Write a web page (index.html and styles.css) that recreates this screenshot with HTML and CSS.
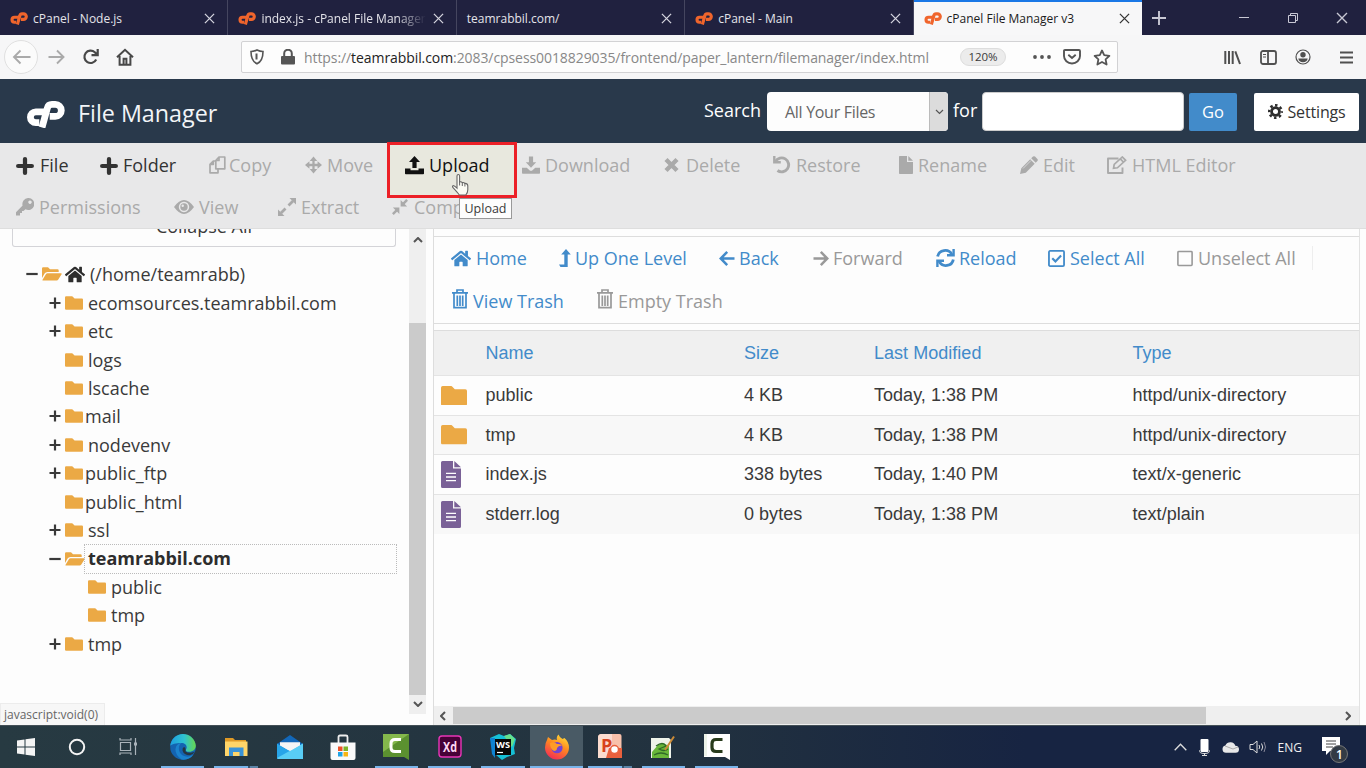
FILE: index.html
```html
<!DOCTYPE html>
<html lang="en">
<head>
<meta charset="utf-8">
<title>cPanel File Manager v3</title>
<link rel="stylesheet" href="styles.css">
</head>
<body>
<svg class="defs" aria-hidden="true">
  <symbol id="cp" viewBox="0 0 39 27"><g fill="none" stroke="currentColor" stroke-width="6.800"><path d="M18 10.800h-8.200a5.400 5.400 0 0 0 0 10.800h3.500" /><path d="M16 26.500l5.400-19.500q.8-3.600 4.600-3.600h3.300a6 6 0 0 1 0 12h-5.600"/></g></symbol>
  <symbol id="x" viewBox="0 0 12 12"><path d="M1 1l10 10M11 1L1 11" fill="none" stroke="currentColor" stroke-width="1.400"/></symbol>
  <symbol id="plus" viewBox="0 0 17 17"><path d="M8.500 2v13M2 8.500h13" stroke="currentColor" stroke-width="4" stroke-linecap="round" stroke-linejoin="round"/></symbol>
  <symbol id="tplus" viewBox="0 0 12 12"><path d="M6 .5v11M.5 6h11" stroke="currentColor" stroke-width="2.200"/></symbol>
  <symbol id="tminus" viewBox="0 0 12 12"><path d="M.3 6h11.400" stroke="currentColor" stroke-width="2.200"/></symbol>
  <symbol id="folder" viewBox="0 64 512 384"><path fill="currentColor" d="M480 128H272l-58-58q-6-6-14-6H32Q0 64 0 96v320q0 32 32 32h448q32 0 32-32V160q0-32-32-32z"/></symbol>
  <symbol id="open" viewBox="0 0 20 14"><path fill="currentColor" d="M0 11V1.500Q0 .3 1.200.3H6l2 2h7.500q1.200 0 1.200 1.200V5H5.500Q3.500 5 2.600 6.600z"/><path fill="currentColor" d="M5.500 6.200H19q1.200 0 .6 1l-3.300 5.400q-.6 1-1.600 1H1.300q-1.300 0-.6-1L3.900 7.200q.6-1 1.600-1z"/></symbol>
  <symbol id="home" viewBox="0 32 576 448"><path fill="currentColor" d="M280.370 148.260L96 300.110V464a16 16 0 0 0 16 16l112.060-.29a16 16 0 0 0 15.920-16V368a16 16 0 0 1 16-16h64a16 16 0 0 1 16 16v95.640a16 16 0 0 0 16 16.050L464 480a16 16 0 0 0 16-16V300L295.670 148.260a12.190 12.190 0 0 0-15.300 0zM571.600 251.470L488 182.560V44.050a12 12 0 0 0-12-12h-56a12 12 0 0 0-12 12v72.610L318.470 43a48 48 0 0 0-61 0L4.340 251.470a12 12 0 0 0-1.600 16.900l25.500 31A12 12 0 0 0 45.150 301l235.220-193.740a12.190 12.190 0 0 1 15.300 0L530.900 301a12 12 0 0 0 16.900-1.600l25.500-31a12 12 0 0 0-1.700-16.930z"/></symbol>
  <symbol id="copy" viewBox="0 0 17 18"><g fill="none" stroke="currentColor" stroke-width="1.700" stroke-linejoin="round"><path d="M10 1h5.800v11.800H6.800V4.500zM10 1v3.500H6.800"/><path d="M6.800 5H4.300L1 8.300v8.500h8v-4M4.300 5v3.300H1"/></g></symbol>
  <symbol id="move" viewBox="0 0 18 18"><path d="M9 3v12M3 9h12" stroke="currentColor" stroke-width="2.400"/><path fill="currentColor" d="M9 0l4 4.700H5zM9 18l4-4.700H5zM0 9l4.700-4v8zM18 9l-4.700-4v8z"/></symbol>
  <symbol id="upload" viewBox="0 0 19 19"><path fill="currentColor" d="M9.500 0L15 6h-3.400v6H7.400V6H4zM0 12.500h5.500v1.800h8v-1.800H19v5q0 .8-.8.8H.8q-.8 0-.8-.8z"/></symbol>
  <symbol id="download" viewBox="0 0 19 19"><path fill="currentColor" d="M7.300 0h4.400v6H15l-5.500 6L4 6h3.300zM0 12h5l3.500 3h2L14 12h5v5.500q0 .8-.8.8H.8q-.8 0-.8-.8z"/></symbol>
  <symbol id="times" viewBox="0 0 15 15"><path d="M2 2l11 11M13 2L2 13" stroke="currentColor" stroke-width="4.400"/></symbol>
  <symbol id="undo" viewBox="0 0 18 18"><path d="M2.500 5.500a7 7 0 1 1 2 9" fill="none" stroke="currentColor" stroke-width="2.900"/><path d="M1.300 0v6.200h6.500" fill="none" stroke="currentColor" stroke-width="2.400"/></symbol>
  <symbol id="file" viewBox="0 0 14 18"><path fill="currentColor" d="M0 .8Q0 0 .8 0H8v6h6v11.200q0 .8-.8.8H.8q-.8 0-.8-.8zM9.300 0L14 4.800H9.300z"/></symbol>
  <symbol id="pencil" viewBox="0 0 18 18"><path fill="currentColor" d="M0 18l1.300-5.800 8.900-8.900 4.500 4.500-8.900 8.900zM11.200 2.300L13 .6q1-.9 2 0l2.400 2.400q.9 1 0 2l-1.700 1.800z"/><path d="M3 12.500l8-8" stroke="#e8e8e9" stroke-width=".7"/></symbol>
  <symbol id="edit" viewBox="0 0 20 18"><path d="M11.500 2.500H1v14.500h14.500V11.500" fill="none" stroke="currentColor" stroke-width="1.900" stroke-linejoin="round"/><path d="M6.500 12.300l.7-3.800L15.300 1l3.300 3.300-8.200 7.500zM13.300 2.900l3.200 3.200" fill="none" stroke="currentColor" stroke-width="1.700"/></symbol>
  <symbol id="key" viewBox="0 0 18 18"><path fill="currentColor" fill-rule="evenodd" d="M12 0a6 6 0 1 1-2.500 11.300L7.500 13H6v2H4v2.500H0v-3.300l6.600-6.600A6 6 0 0 1 12 0zm2 2.500a1.700 1.700 0 1 0 .01 0z"/></symbol>
  <symbol id="eye" viewBox="0 0 20 14"><path fill="currentColor" fill-rule="evenodd" d="M0 7q10-14 20 0-10 14-20 0zm10-5.200a5.200 5.200 0 1 0 .01 0z"/><circle cx="10" cy="7" r="3.700" fill="currentColor"/><circle cx="8.700" cy="5.700" r="1.200" fill="#e8e8e9"/></symbol>
  <symbol id="extract" viewBox="0 0 18 18"><path d="M10.500 7.500L15 3M7.500 10.500L3 15" stroke="currentColor" stroke-width="2.800"/><path fill="currentColor" d="M11.500 0H18v6.500zM0 11.500V18h6.500z"/></symbol>
  <symbol id="compress" viewBox="0 0 18 18"><path d="M12 6l5-5M6 12l-5 5" stroke="currentColor" stroke-width="2.800"/><path fill="currentColor" d="M9.700 1v7.300H17zM1 9.700h7.300V17z"/></symbol>
  <symbol id="level" viewBox="0 0 12 18"><path fill="currentColor" d="M7 0l4.800 5.500H8.700V18H1.500L0 15.600h5.300V5.500H2.200z"/></symbol>
  <symbol id="left" viewBox="0 0 16 16"><path d="M8.200 1.400L1.700 8l6.500 6.600M2 8h13.500" fill="none" stroke="currentColor" stroke-width="2.500"/></symbol>
  <symbol id="right" viewBox="0 0 16 16"><path d="M7.800 1.400L14.300 8l-6.500 6.600M14 8H.5" fill="none" stroke="currentColor" stroke-width="2.500"/></symbol>
  <symbol id="reload" viewBox="0 0 19 18"><g fill="none" stroke="currentColor" stroke-width="2.800"><path d="M1.700 7.500A7.500 7 0 0 1 15.800 5.300M17.300 10.500A7.500 7 0 0 1 3.200 12.700"/><path d="M17.600 0v6.200H11M1.400 18v-6.200H8" stroke-width="2.400"/></g></symbol>
  <symbol id="check" viewBox="0 0 16 16"><rect x=".9" y=".9" width="14.200" height="14.200" rx="1" fill="none" stroke="currentColor" stroke-width="1.700"/><path d="M4 7.700l3 3 5.300-5.600" fill="none" stroke="currentColor" stroke-width="2"/></symbol>
  <symbol id="box" viewBox="0 0 16 16"><rect x=".9" y=".9" width="14.200" height="14.200" rx="1" fill="none" stroke="currentColor" stroke-width="1.600"/></symbol>
  <symbol id="trash" viewBox="0 0 16 20"><path d="M0 3.800h16M5 3.500V1h6v2.500M2 4v14.700h12V4M5.300 6.500V17M8 6.500V17M10.700 6.500V17" fill="none" stroke="currentColor" stroke-width="1.700"/></symbol>
  <symbol id="doc" viewBox="0 0 20 27"><path fill="#7a6197" d="M0 1.500Q0 0 1.500 0H12v7.500h8v18q0 1.500-1.500 1.500h-17Q0 27 0 25.500zM13.300 0L20 6.300h-6.700z"/><path d="M5 12.300h10M5 16h10M5 19.600h10" stroke="#fff" stroke-width="1.300"/></symbol>
  <symbol id="chev" viewBox="0 0 10 6"><path d="M1 5l4-4 4 4" fill="none" stroke="currentColor" stroke-width="2"/></symbol>
</svg>

<div class="tabs">
  <div class="tab"><svg class="fav"><use href="#cp"/></svg><span>cPanel - Node.js</span><svg class="close"><use href="#x"/></svg></div>
  <div class="tab"><svg class="fav"><use href="#cp"/></svg><span class="fade">index.js - cPanel File Manager</span><svg class="close"><use href="#x"/></svg></div>
  <div class="tab"><span>teamrabbil.com/</span><svg class="close"><use href="#x"/></svg></div>
  <div class="tab"><svg class="fav"><use href="#cp"/></svg><span>cPanel - Main</span><svg class="close"><use href="#x"/></svg></div>
  <div class="tab active"><svg class="fav"><use href="#cp"/></svg><span class="wide">cPanel File Manager v3</span><svg class="close"><use href="#x"/></svg></div>
  <svg class="newtab" viewBox="0 0 16 16"><path d="M8 1v14M1 8h14" stroke="#c8c8d4" stroke-width="1.900"/></svg>
  <div class="winbtns">
    <svg width="12" height="12"><path d="M1 5.500h10" stroke="#c8c8d4"/></svg>
    <svg width="12" height="12" fill="none" stroke="#c8c8d4"><path d="M1.500 3.500h7v7h-7zM3.500 3.500v-2h7v7h-2"/></svg>
    <svg width="12" height="12" color="#c8c8d4"><use href="#x"/></svg>
  </div>
</div>

<div class="nav">
  <span class="backbtn"><svg width="19" height="16" fill="none" stroke="#aaa" stroke-width="1.900"><path d="M8.500 1.500L2 8l6.500 6.500M2 8h16.500"/></svg></span>
  <svg class="fwd" width="18" height="16" fill="none" stroke="#aaa" stroke-width="1.900"><path d="M9 1.500L15.500 8 9 14.500M15 8H.5"/></svg>
  <svg class="rel" width="18" height="18" fill="none" stroke="#484848" stroke-width="2.200"><path d="M14.200 11.500A6.200 6.200 0 1 1 12.800 4.200L15 6.400M15.700 1v6.200H9.500"/></svg>
  <svg class="hm" width="18" height="18" fill="none" stroke="#484848" stroke-width="2"><path d="M1 9.300L9 1.800l8 7.500M3.600 8v8.700h10.800V8M7.600 16.500v-5.800h2.800v5.800"/></svg>
  <div class="url">
    <svg width="14" height="16" fill="none" stroke="#555" stroke-width="1.600"><path d="M1 2.500Q4 2.500 7 1q3 1.500 6 1.500 0 9.500-6 12.300Q1 12 1 2.500z"/><path d="M6.500 4.500v6" stroke-width="2"/></svg>
    <svg class="lock" width="14" height="16"><rect x="0" y="7" width="14" height="8.500" rx="1" fill="#555"/><path d="M3.200 7V4.500a3.800 3.800 0 0 1 7.600 0V7" fill="none" stroke="#555" stroke-width="2"/></svg>
    <span class="addr">https://<b>teamrabbil.com</b>:2083/cpsess0018829035/frontend/paper_lantern/filemanager/index.html</span>
    <span class="zoom">120%</span>
    <svg class="dots" width="18" height="4" fill="#555"><circle cx="2" cy="2" r="1.900"/><circle cx="9" cy="2" r="1.900"/><circle cx="16" cy="2" r="1.900"/></svg>
    <svg class="pocket" width="18" height="16" fill="none" stroke="#555" stroke-width="1.900"><path d="M1 2q0-1 1-1h14q1 0 1 1v5a8 7.500 0 0 1-16 0zM5.300 5.700L9 9l3.700-3.300"/></svg>
    <svg class="star" width="18" height="17" fill="none" stroke="#555" stroke-width="1.800"><path d="M9 1.500l2.200 4.700 5.200.6-3.800 3.500 1 5.200L9 13l-4.600 2.500 1-5.200L1.600 6.800l5.200-.6z" stroke-linejoin="round"/></svg>
  </div>
  <div class="tools">
    <svg width="17" height="15" stroke="#505050" stroke-width="2"><path d="M1.300 1v13M5 1v13M8.700 1v13M11.300 1.300L16 14" /></svg>
    <svg width="17" height="15" fill="none" stroke="#505050" stroke-width="1.800"><rect x="1" y="1" width="15" height="13" rx="2"/><path d="M8 1v13"/><path d="M3 4.500h3M3 7h3" stroke-width="1.200"/></svg>
    <svg width="16" height="16"><circle cx="8" cy="8" r="7" fill="none" stroke="#505050" stroke-width="1.200"/><circle cx="8" cy="5.700" r="2.700" fill="#505050"/><path d="M3.300 9.500h9.400q-.7 3.800-4.700 3.800t-4.700-3.800z" fill="#505050"/></svg>
    <svg width="13" height="13" stroke="#505050" stroke-width="1.900"><path d="M0 1.500h13M0 6.500h13M0 11.500h13"/></svg>
  </div>
</div>

<header class="header">
  <svg class="logo"><use href="#cp"/></svg>
  <h1>File Manager</h1>
  <label>Search</label>
  <div class="select"><span>All Your Files</span><i><svg width="9" height="6" fill="none" stroke="#555" stroke-width="1.200"><path d="M1 1l3.500 3.500L8 1"/></svg></i></div>
  <label class="for">for</label>
  <div class="input"></div>
  <div class="go">Go</div>
  <div class="settings"><svg width="15" height="15" viewBox="0 0 16 16" fill="none" stroke="#2d2d2d"><circle cx="8" cy="8" r="4.200" stroke-width="3"/><circle cx="8" cy="8" r="6.700" stroke-width="2.600" stroke-dasharray="2.630 2.632" stroke-dashoffset="1.300"/></svg><span>Settings</span></div>
</header>

<div class="bar">
  <div class="row r1">
    <div class="it on"><svg class="g24" viewBox="0 0 24 19"><use href="#plus" width="18" height="18" y="1"/></svg><span>File</span></div>
    <div class="it on"><svg class="g23" viewBox="0 0 23 19"><use href="#plus" width="18" height="18" y="1"/></svg><span>Folder</span></div>
    <div class="it"><svg class="g20" viewBox="0 0 20 19"><use href="#copy" width="17" height="18"/></svg><span>Copy</span></div>
    <div class="it"><svg class="g22" viewBox="0 0 22 19"><use href="#move" width="17" height="18"/></svg><span>Move</span></div>
    <div class="it up"><svg class="g24" viewBox="0 0 24 19"><use href="#upload" width="19" height="19"/></svg><span>Upload</span></div>
    <div class="it"><svg class="g23" viewBox="0 0 23 19"><use href="#download" width="18" height="19"/></svg><span>Download</span></div>
    <div class="it"><svg class="g22" viewBox="0 0 22 19"><use href="#times" width="15" height="15" y="1.500"/></svg><span>Delete</span></div>
    <div class="it"><svg class="g23" viewBox="0 0 23 19"><use href="#undo" width="18" height="18"/></svg><span>Restore</span></div>
    <div class="it"><svg class="g19" viewBox="0 0 19 19"><use href="#file" width="14" height="18"/></svg><span>Rename</span></div>
    <div class="it"><svg class="g23" viewBox="0 0 23 19"><use href="#pencil" width="18" height="18"/></svg><span>Edit</span></div>
    <div class="it"><svg class="g25" viewBox="0 0 25 19"><use href="#edit" width="20" height="18"/></svg><span>HTML Editor</span></div>
  </div>
  <div class="row r2">
    <div class="it"><svg class="g23" viewBox="0 0 23 19"><use href="#key" width="18" height="18"/></svg><span>Permissions</span></div>
    <div class="it"><svg class="g25" viewBox="0 0 25 19"><use href="#eye" width="20" height="14" y="2"/></svg><span>View</span></div>
    <div class="it"><svg class="g23" viewBox="0 0 23 19"><use href="#extract" width="18" height="18"/></svg><span>Extract</span></div>
    <div class="it"><svg class="g22" viewBox="0 0 22 19"><use href="#compress" width="16" height="18"/></svg><span>Compress</span></div>
  </div>
</div>
<div class="mark"></div>
<div class="tip">Upload</div>
<svg class="cursor" viewBox="0 0 19 22"><path d="M6 13V2.500q0-1.500 1.300-1.500t1.300 1.500V8.500q1.500-.8 2.700.6 1.500-.5 2.500.8 2.700-.2 3 2.300v4q0 3-2 5.300H8.300Q6.500 19 2 14.200q-1-1.500 0-2t4 2.500z" fill="#fbfbf4" stroke="#666" stroke-width="1.100"/><path d="M8.600 8v4M11.300 9v3.500M13.900 10v3" stroke="#666" stroke-width="1"/></svg>

<main class="main">
  <aside class="side">
    <div class="collapse"><span>Collapse All</span></div>
    <div class="tree">
      <div class="n l0"><svg class="tg"><use href="#tminus"/></svg><svg class="fo"><use href="#open"/></svg><svg class="ho"><use href="#home"/></svg><span>(/home/teamrabb)</span></div>
      <div class="n"><svg class="tg"><use href="#tplus"/></svg><svg class="fd"><use href="#folder"/></svg><span>ecomsources.teamrabbil.com</span></div>
      <div class="n"><svg class="tg"><use href="#tplus"/></svg><svg class="fd"><use href="#folder"/></svg><span>etc</span></div>
      <div class="n"><i class="tg"></i><svg class="fd"><use href="#folder"/></svg><span>logs</span></div>
      <div class="n"><i class="tg"></i><svg class="fd"><use href="#folder"/></svg><span>lscache</span></div>
      <div class="n near"><svg class="tg"><use href="#tplus"/></svg><svg class="fd"><use href="#folder"/></svg><span>mail</span></div>
      <div class="n"><svg class="tg"><use href="#tplus"/></svg><svg class="fd"><use href="#folder"/></svg><span>nodevenv</span></div>
      <div class="n near"><svg class="tg"><use href="#tplus"/></svg><svg class="fd"><use href="#folder"/></svg><span>public_ftp</span></div>
      <div class="n near"><i class="tg"></i><svg class="fd"><use href="#folder"/></svg><span>public_html</span></div>
      <div class="n"><svg class="tg"><use href="#tplus"/></svg><svg class="fd"><use href="#folder"/></svg><span>ssl</span></div>
      <div class="n sel"><svg class="tg"><use href="#tminus"/></svg><svg class="fo"><use href="#open"/></svg><b>teamrabbil.com</b></div>
      <div class="n l2"><svg class="fd"><use href="#folder"/></svg><span>public</span></div>
      <div class="n l2"><svg class="fd"><use href="#folder"/></svg><span>tmp</span></div>
      <div class="n"><svg class="tg"><use href="#tplus"/></svg><svg class="fd"><use href="#folder"/></svg><span>tmp</span></div>
    </div>
    <div class="status">javascript:void(0)</div>
  </aside>
  <div class="vscroll"><svg class="ar"><use href="#chev"/></svg><div class="thumb"></div><svg class="ar down"><use href="#chev"/></svg></div>
  <section class="files">
    <div class="actions">
      <div class="row a1">
        <div class="it"><svg class="g25" viewBox="0 0 25 19"><use href="#home" width="20" height="17" y="1"/></svg><span>Home</span></div>
        <div class="it"><svg class="g16" viewBox="0 0 16 19"><use href="#level" width="12" height="18"/></svg><span>Up One Level</span></div>
        <div class="it"><svg class="g20" viewBox="0 0 20 19"><use href="#left" width="16" height="16" y="1.500"/></svg><span>Back</span></div>
        <div class="it off"><svg class="g20" viewBox="0 0 20 19"><use href="#right" width="16" height="16" y="1.500"/></svg><span>Forward</span></div>
        <div class="it"><svg class="g23" viewBox="0 0 23 19"><use href="#reload" width="19" height="18"/></svg><span>Reload</span></div>
        <div class="it"><svg class="g22" viewBox="0 0 22 19"><use href="#check" width="17" height="17" y="1"/></svg><span>Select All</span></div>
        <div class="it off"><svg class="g21" viewBox="0 0 21 19"><use href="#box" width="16" height="16" y="1.500"/></svg><span>Unselect All</span></div>
      </div>
      <div class="row a2">
        <div class="it"><svg class="g22" viewBox="0 0 22 21"><use href="#trash" x="1" width="16" height="20"/></svg><span>View Trash</span></div>
        <div class="it off"><svg class="g22" viewBox="0 0 22 21"><use href="#trash" x="1" width="16" height="20"/></svg><span>Empty Trash</span></div>
      </div>
    </div>
    <div class="table">
      <div class="tr th"><span></span><span>Name</span><span>Size</span><span>Last Modified</span><span>Type</span></div>
      <div class="tr"><svg class="bigf"><use href="#folder"/></svg><span>public</span><span>4 KB</span><span>Today, 1:38 PM</span><span>httpd/unix-directory</span></div>
      <div class="tr alt"><svg class="bigf"><use href="#folder"/></svg><span>tmp</span><span>4 KB</span><span>Today, 1:38 PM</span><span>httpd/unix-directory</span></div>
      <div class="tr"><svg class="doc"><use href="#doc"/></svg><span>index.js</span><span>338 bytes</span><span>Today, 1:40 PM</span><span>text/x-generic</span></div>
      <div class="tr alt"><svg class="doc"><use href="#doc"/></svg><span>stderr.log</span><span>0 bytes</span><span>Today, 1:38 PM</span><span>text/plain</span></div>
    </div>
    <div class="hscroll"><svg class="ar l"><use href="#chev"/></svg><div class="hthumb"></div><svg class="ar r"><use href="#chev"/></svg></div>
  </section>
</main>

<footer class="task">
  <div class="c s"><svg viewBox="0 0 18 18" width="18" height="18" fill="#f4f4f4"><path d="M0 2.600L7.500 1.500v7H0zM8.500 1.300L18 0v8.500H8.500zM0 9.500h7.500v7L0 15.400zM8.500 9.500H18V18l-9.500-1.300z"/></svg></div>
  <div class="c s"><svg width="18" height="18"><circle cx="9" cy="9" r="7.200" fill="none" stroke="#f4f4f4" stroke-width="2"/></svg></div>
  <div class="c s"><svg width="19" height="17" fill="none" stroke="#aab3ba" stroke-width="1.200"><path d="M1.500 4.500h10v8h-10zM1 0v2h11V0M1 17v-2h11v2M16.500 0v17"/><path d="M15 6h3" stroke-width="3"/></svg></div>
  <div class="c run"><svg viewBox="0 0 26 26" width="26" height="26"><defs><linearGradient id="eg" x1="0" x2="1"><stop offset="0" stop-color="#1d9ee0"/><stop offset=".55" stop-color="#2fc3d0"/><stop offset="1" stop-color="#67d84d"/></linearGradient></defs><circle cx="13" cy="13" r="12.800" fill="#1463b0"/><path d="M.3 12A12.800 12.800 0 0 1 25.800 11.500c0 4.500-3.500 6.500-7 6.200-3 0-3.600-1.200-2.600-2.700 1.500-3-.8-6-4.700-6C6 9 1.500 10 .3 12z" fill="url(#eg)"/><path d="M11.500 9C7 12 8 21 16 22.500q4 .7 7.500-2-4 6-12 5Q5 21 5.500 15 6.200 9.500 11.500 9z" fill="#1b82cd"/><path d="M15.500 17.400q3.500 2.300 9 .4-1.500 3-4.500 3.500-6 .2-7.500-4.800-.3-2.700 1.500-3.600 2 .6 1.500 4.500z" fill="#263640"/></svg></div>
  <div class="c run multi"><svg viewBox="0 0 24 20" width="24" height="20"><path d="M1 1h8l2 2h11v4H1z" fill="#df9a26"/><path d="M1 4.500h22.500V19H1z" fill="#ffd569"/><path d="M5 19v-8.500h14.500V19h-4v-4h-6.500v4z" fill="#3a93d7"/></svg></div>
  <div class="c"><svg viewBox="0 0 26 24" width="26" height="24"><path d="M0 9L13 0l13 9v14H0z" fill="#1267b8"/><path d="M3 7.500h20v8H3z" fill="#f5f5f5"/><path d="M0 8.500l13 7.500 13-7.500v14.500q0 1-1 1H1q-1 0-1-1z" fill="#27a4e8"/><path d="M0 23L26 8.500V24H1z" fill="#59cdf5"/><path d="M3 7.500h20v2.700L13 16 3 10.200z" fill="#f5f5f5"/></svg></div>
  <div class="c"><svg viewBox="0 0 26 26" width="26" height="26"><path d="M8.500 9V3q0-1.500 1.500-1.500h6q1.500 0 1.500 1.500v6" fill="none" stroke="#eee" stroke-width="1.800"/><path d="M.5 8.500h25V24q0 2-2 2h-21q-2 0-2-2z" fill="#fafafa"/><path d="M8 12.500h4.500V17H8z" fill="#ef5128"/><path d="M13.500 12.500H18V17h-4.500z" fill="#7eb52a"/><path d="M8 18h4.500v4.500H8z" fill="#20a3e6"/><path d="M13.500 18H18v4.500h-4.500z" fill="#f9b613"/></svg></div>
  <div class="c run"><svg viewBox="0 0 26 26" width="26" height="26"><path d="M0 0h26v26l-5-3H0z" fill="#5b9130"/><path d="M0 0h26L0 18z" fill="#84b84c"/><path d="M18 5.500h-6q-4 0-4 4v4q0 4 4 4h6" fill="none" stroke="#fff" stroke-width="3"/></svg></div>
  <div class="c run"><svg viewBox="0 0 24 23" width="24" height="23"><rect x="1" y="1" width="22" height="21" rx="3" fill="#470137" stroke="#e935b7" stroke-width="1.400"/><text x="5" y="16.500" textLength="14" lengthAdjust="spacingAndGlyphs" class="xd">Xd</text></svg></div>
  <div class="c run"><svg viewBox="0 0 26 26" width="26" height="26"><path d="M0 4L9 0l5 2 6-2 6 5-2 9 1 6-8 3-5 3-6-5z" fill="#16c0d6"/><path d="M14 2l6-2 5 5-3 8z" fill="#68e08a"/><path d="M0 4l5 0v20L2 20z" fill="#0f83d2"/><rect x="5" y="5" width="16" height="16" fill="#080808"/><text x="6" y="14" textLength="14" lengthAdjust="spacingAndGlyphs" class="ws">WS</text><path d="M7 18.500h6" stroke="#fff" stroke-width="1.200"/></svg></div>
  <div class="c run cur"><svg viewBox="0 0 26 26" width="26" height="26"><defs><linearGradient id="fx" x1=".8" x2=".3" y1="0" y2="1"><stop offset="0" stop-color="#ffe13a"/><stop offset=".45" stop-color="#ff8a20"/><stop offset="1" stop-color="#f42b55"/></linearGradient></defs><path d="M3 6l1-3 4 3q3-1 5 0Q12 3 14.500.5q1 3 4 4.500l2-1q4.500 4 4.500 9.500a12 12 0 0 1-24 0Q1 9 3 6z" fill="url(#fx)"/><circle cx="13" cy="13.700" r="5.600" fill="#7443d2"/><path d="M6 9q4-2 7 1 4-.6 5 2-3-.8-5 2 0 3-3 3-4-2-4-8z" fill="#ff9c28"/></svg></div>
  <div class="c run multi"><svg viewBox="0 0 26 25" width="26" height="25"><path d="M1 3.500Q1 0 4.500 0h18Q24.500 0 24.500 2V24H1z" fill="#f8c1ab"/><path d="M1 3.500Q1 0 4.500 0H15v24H1z" fill="#fbdccf"/><path d="M12 14h13v10H9z" fill="#e9603d"/><circle cx="17.500" cy="15.500" r="4" fill="#fff" stroke="#e9603d" stroke-width="1.500"/><text x="4" y="18" class="pp">P</text></svg></div>
  <div class="c run"><svg viewBox="0 0 26 24" width="26" height="24"><path d="M1 3h18l2 2v18H1z" fill="#eef3ea"/><path d="M2 17l6-7 5-2 6 3v12H2z" fill="#69b73a"/><path d="M6 11q7-5 10 0l-7 3q5 3 9 0M4 20q7-4 14 0" fill="none" stroke="#2f6a28" stroke-width="1.300"/><path d="M15 15L24 1.500" stroke="#cc8b37" stroke-width="2"/></svg></div>
  <div class="c run"><svg viewBox="0 0 26 26" width="26" height="26"><path d="M0 0h26v26l-5-3H0z" fill="#fff"/><path d="M0 0h3v22H0z" fill="#edf3e9"/><path d="M18.500 5.500H12q-4 0-4 4v4q0 4 4 4h6.500" fill="none" stroke="#283b1c" stroke-width="3.200"/></svg></div>
  <div class="tray">
    <svg width="13" height="8"><path d="M.7 7.300l5.800-6 5.800 6" fill="none" stroke="#ddd" stroke-width="1.300"/></svg>
    <svg width="11" height="17"><rect x="1.500" y="0" width="8" height="13" rx="1" fill="#fff"/><path d="M0 11q0 3.500 5.500 3.500T11 11M5.500 14v3M3 16.500h5" fill="none" stroke="#ddd"/></svg>
    <svg width="17" height="11"><path d="M4 10.800a3.700 3.700 0 0 1-.6-7.300Q5 0 8.700.2q3.600.2 4.600 3.500Q17 4 17 7.300q0 3.500-3.500 3.500z" fill="#e8e8e8"/><path d="M3 4l8 3 5-2" fill="none" stroke="#aaa"/></svg>
    <svg width="17" height="14" fill="none" stroke="#ddd"><path d="M1 4.500h3L8 1v12L4 9.500H1zM10 5q1.500 2 0 4M12.500 3.500q2.500 3.500 0 7" /><path d="M15 2q3 5 0 10" stroke="#889"/></svg>
    <span>ENG</span>
    <svg class="act" width="27" height="27"><path d="M1 0h18v14H9l-4 4v-4H1z" fill="#fff"/><path d="M5 4h10M5 7h10M5 10h7" stroke="#444"/><circle cx="18" cy="17" r="8.500" fill="#333b45" stroke="#777"/><text x="15" y="21.500" class="bd">1</text></svg>
  </div>
</footer>
</body>
</html>
```
FILE: styles.css
```css
* { box-sizing: border-box; }
body { margin: 0; width: 1366px; height: 768px; overflow: hidden; position: relative; display: flex; flex-direction: column; background: #fdfdfd; font-family: "Open Sans", "Noto Sans", sans-serif; color: #3a3a3a; font-size: 18px; white-space: nowrap; }
svg, .it, .c, .tab > * { flex-shrink: 0; }
.defs { position: absolute; width: 0; height: 0; }

.tabs { height: 35px; background: #20213f; display: flex; flex-shrink: 0; align-items: center; font-size: 12px; color: #e4e4ea; }
.tab { width: 228.400px; height: 35px; display: flex; align-items: center; padding: 2px 12px 0 10px; border-right: 1px solid #45465f; }
.tab .fav { width: 18px; height: 13px; color: #f0652c; margin-right: 5px; }
.tab .close { width: 11px; height: 11px; margin-left: auto; color: #d5d5df; }
.tab .fade { width: 165px; overflow: hidden; -webkit-mask-image: linear-gradient(90deg, #000 82%, transparent); mask-image: linear-gradient(90deg, #000 82%, transparent); }
.tab.active { background: #f7f7f8; border-top: 2px solid #1a78e6; border-right: 0; color: #1b1b1b; padding-top: 0; }
.tab.active .close { color: #333; }
.newtab { width: 16px; height: 16px; margin-left: 9px; }
.winbtns { margin-left: auto; display: flex; gap: 37px; padding-right: 18px; }

.nav { height: 44px; background: #f6f6f7; display: flex; flex-shrink: 0; align-items: center; }
.backbtn { width: 34px; height: 34px; margin-left: 4px; border-radius: 50%; border: 1px solid #e0e0e0; background: #fbfbfb; display: flex; align-items: center; justify-content: center; }
.fwd { margin-left: 10px; }
.rel { margin-left: 16px; }
.hm { margin-left: 16px; }
.url { margin-left: 107px; width: 877px; height: 32px; border: 1px solid #d2d2d4; border-radius: 2px; background: #fdfdfd; display: flex; align-items: center; padding-left: 8px; }
.lock { margin-left: 17px; }
.addr { margin-left: 9px; width: 656px; font-size: 14px; letter-spacing: -.08px; color: #888; }
.addr b { font-weight: 400; color: #222; }
.zoom { width: 46px; height: 18px; border: 1px solid #ddd; border-radius: 9px; background: #ececec; font-size: 11.500px; line-height: 16px; text-align: center; }
.dots { margin-left: 27px; }
.pocket { margin-left: 12px; }
.star { margin-left: 12px; }
.tools { margin-left: auto; padding-right: 13px; display: flex; align-items: center; gap: 18px; }
.tools svg:first-child { margin-right: 1px; }
.tools svg:last-child { margin-left: 11px; }

.header { height: 64px; background: #29394b; color: #fff; display: flex; flex-shrink: 0; align-items: center; padding-top: 2px; }
.logo { width: 39px; height: 27px; margin-left: 26px; margin-top: 5px; }
.header h1 { margin: 1px 0 0 13px; width: 626px; font-size: 23.300px; font-weight: 400; color: #f2f5f8; }
.header label { width: 63px; margin-top: -5px; }
.select { width: 181px; height: 39px; background: #fdfdfd; border-radius: 4px; color: #666; display: flex; align-items: center; justify-content: space-between; padding-left: 18px; font-size: 16px; letter-spacing: -.3px; overflow: hidden; }
.header .select, .input, .go, .settings { margin-top: -1px; }
.select i { width: 19px; height: 39px; background: #dcdcdc; border-left: 1px solid #bbb; display: flex; align-items: center; justify-content: center; }
.header .for { margin-left: 5px; width: 29px; }
.input { width: 202px; height: 39px; background: #fff; border-radius: 4px; border: 1px solid #ccc; }
.go { width: 48px; height: 38px; margin-left: 5px; background: #428bca; border-radius: 2px; font-size: 16.500px; line-height: 38px; text-align: center; }
.settings { width: 105px; height: 38px; margin-left: 17px; background: #fff; border-radius: 2px; color: #333; font-size: 16px; letter-spacing: -.15px; display: flex; align-items: center; justify-content: center; gap: 4px; padding-left: 1px; }

.bar { height: 86px; flex-shrink: 0; background: #e8e8e9; border-bottom: 1px solid #dedede; padding: 1px 0 0 16px; display: flex; flex-direction: column; color: #aaa; }
.row { display: grid; height: 43px; align-items: center; }
.it { display: flex; align-items: center; position: relative; }
.it span { line-height: 24px; }
.it svg { height: 19px; }
.on { color: #333; }
.up { color: #111; z-index: 5; }
.r1 { grid-template-columns: 84px 109px 96px 100px 117px 142px 109px 126px 121px 87px 150px; }
.r2 { grid-template-columns: 158px 104px 114px 120px; }
.bar .r2 { height: 42px; }
.g16 { width: 16px; } .g19 { width: 19px; } .g20 { width: 20px; } .g21 { width: 21px; } .g22 { width: 22px; }
.g23 { width: 23px; } .g24 { width: 24px; } .g25 { width: 25px; }
.mark { position: absolute; left: 387px; top: 142px; width: 130px; height: 56px; border: 3px solid #ec2027; background: rgba(232, 232, 214, .55); z-index: 3; }
.tip { position: absolute; left: 459px; top: 198px; width: 53px; height: 21px; background: #fdfdfd; border: 1px solid #999; font-size: 12.500px; line-height: 19px; text-align: center; z-index: 4; }
.cursor { position: absolute; left: 451px; top: 173px; width: 19px; height: 23px; z-index: 6; }

.main { height: 496px; flex-shrink: 0; display: flex; }
.side { width: 409px; display: flex; flex-direction: column; }
.collapse { width: 384px; height: 18px; margin-left: 12px; border: 1px solid #d4d4d8; border-top: 0; border-radius: 0 0 3px 3px; overflow: hidden; display: flex; align-items: flex-end; justify-content: center; }
.collapse span { line-height: 24px; margin-bottom: 8px; }
.tree { padding-top: 13px; }
.n { height: 28.450px; display: flex; align-items: center; padding-left: 49px; }
.n.l0 { padding-left: 26px; }
.n.l2 { padding-left: 88px; }
.n.l2 span { padding-left: 5px; }
.tg { width: 12px; height: 12px; margin-right: 4px; flex-shrink: 0; }
.fd { width: 18px; height: 14px; color: #eba945; margin-right: 5px; }
.fo { width: 20px; height: 14px; color: #eba945; margin-right: 3px; }
.l0 .fo { margin-right: 3px; }
.ho { width: 20px; height: 17px; margin-right: 5px; color: #2d2d2d; }
.near .fd { margin-right: 2px; }
.l2 .fd { margin-right: 0; }
.sel .fo { margin-right: -1px; }
.sel b { flex: 1; height: 30px; line-height: 27px; border: 1px dotted #bbb; padding-left: 3px; margin-right: 12px; color: #2d2d2d; }
.status { margin-top: auto; width: 105px; height: 22px; background: #f7f7f7; border: 1px solid #ececec; border-bottom: 0; font-size: 12px; line-height: 21px; padding-left: 3px; color: #666; }
.vscroll { width: 17px; height: 485px; background: #efefef; display: flex; flex-direction: column; align-items: center; justify-content: space-between; padding: 8px 0 7px; color: #555; }
.ar { width: 10px; height: 6px; }
.down { transform: rotate(180deg); }
.thumb { width: 17px; height: 372px; background: #cbcbcb; margin-top: 80px; margin-bottom: 6px; }
.files { margin-left: 7px; width: 927px; border-left: 1px solid #ddd; border-right: 1px solid #e2e2e2; display: flex; flex-direction: column; padding-top: 7px; }
.actions { height: 88px; border: 1px solid #ddd; border-left: 0; border-right: 0; padding-left: 17px; color: #428bca; }
.actions .row { padding-bottom: 1px; }
.off { color: #999; }
.a1 { grid-template-columns: 108px 160px 94px 123px 112px 129px 136px; }
.a1 .it:last-child { border-right: 1px solid #eee; }
.a2 { grid-template-columns: 145px 150px; }
.a2 svg { height: 21px; margin-top: -3px; }
.table { margin-top: 6px; font-family: "Liberation Sans", Arial, sans-serif; font-size: 18px; }
.tr { height: 39.500px; display: grid; grid-template-columns: 51.500px 258.500px 130px 258.500px 1fr; align-items: center; border-bottom: 1px solid #e4e4e4; letter-spacing: .03px; }
.tr span { padding-top: 1px; }
.th { height: 46px; background: #f0f0f0; color: #428bca; border-top: 1px solid #ddd; }
.alt { background: #f8f8f8; }
.tr:last-child { border-bottom: 0; }
.bigf { width: 26px; height: 19.500px; margin-left: 6.500px; color: #eba945; }
.doc { width: 20px; height: 27px; margin-left: 6.500px; }
.hscroll { margin-top: auto; height: 19px; background: #efefef; display: flex; align-items: center; padding: 0 6px 0 4px; color: #555; }
.l { transform: rotate(-90deg); }
.r { transform: rotate(90deg); margin-left: auto; }
.hthumb { width: 753px; height: 17px; background: #cbcbcb; margin-left: 5px; }

.task { height: 43px; flex-shrink: 0; display: flex; background: linear-gradient(90deg, #273a42 0, #22323f 50%, #172442 75%); border-top: 1px solid #445057; }
.c { width: 53.400px; height: 42px; display: flex; align-items: center; justify-content: center; position: relative; }
.c.s { width: 51.800px; }
.c.s:first-child { width: 51px; }
.c.s + .run { margin-left: 1.500px; }
.c > svg { margin-top: -1px; }
.run::after { content: ""; position: absolute; left: 5px; right: 5px; bottom: 0; height: 2px; background: #79b4ea; }
.multi::after { background: linear-gradient(90deg, #79b4ea 78%, #35546e 78%, #35546e 81%, #5b83a6 81%); }
.cur { background: #495a65; }
.cur::after { left: 0; right: 0; }
.xd { font: 700 13.500px "Open Sans", sans-serif; fill: #ffd9f4; }
.ws { font: 700 8.500px "Open Sans", sans-serif; fill: #fff; }
.pp { font: 700 18px "Open Sans", sans-serif; fill: #d8421b; }
.bd { font: 600 12px "Open Sans", sans-serif; fill: #fff; }
.tray { margin-left: auto; display: flex; align-items: center; color: #eee; font-size: 12px; padding-right: 18px; }
.tray svg { margin-right: 12px; }
.tray svg:nth-child(3) { margin-right: 10px; }
.tray svg:first-child { margin-left: -2px; }
.tray span { margin-right: 19px; }
.tray .act { margin: 6px 0 0; }
```
